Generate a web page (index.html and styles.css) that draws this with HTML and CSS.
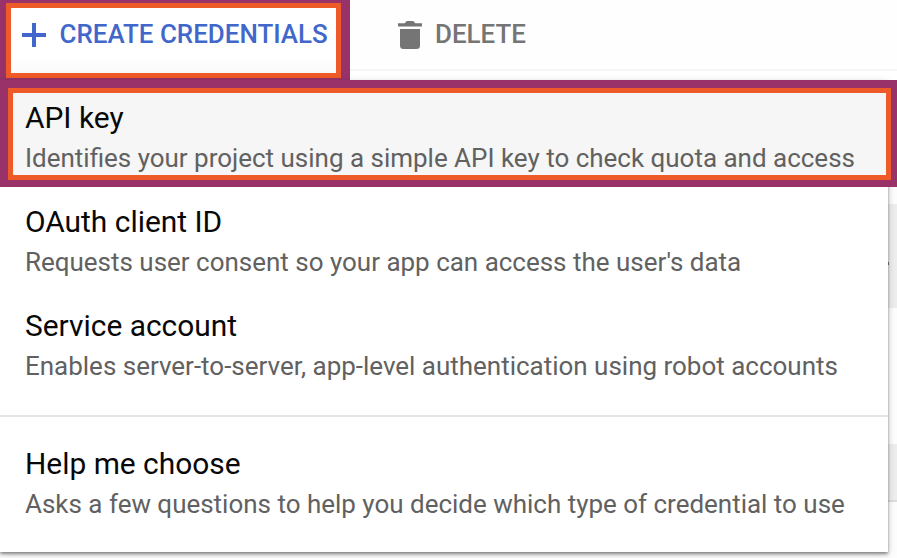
FILE: index.html
```html
<!DOCTYPE html>
<html lang="en">
<head>
<meta charset="utf-8">
<title>Create credentials</title>
<link rel="stylesheet" href="styles.css">
</head>
<body>
<div class="page">
  <div class="toolbar">
    <div class="mark mark-create">
      <button class="action create">
        <svg class="plus" viewBox="0 0 24 24"><path d="M10 0h4v10h10v4H14v10h-4V14H0v-4h10z"/></svg>
        <span>CREATE CREDENTIALS</span>
      </button>
    </div>
    <button class="action delete">
      <svg class="trash" viewBox="0 0 24 28"><path d="M0 2.200h6.800Q8 0 9.500 0h5Q16 0 17.200 2.200H24V5.500H0zM2 8h20v16.500Q22 28 18.500 28h-13Q2 28 2 24.500z"/></svg>
      <span>DELETE</span>
    </button>
  </div>
  <div class="content">
    <div class="menu">
      <div class="mark mark-item">
        <div class="item selected">
          <div class="title">API key</div>
          <div class="desc">Identifies your project using a simple API key to check quota and access</div>
        </div>
      </div>
      <div class="item">
        <div class="title">OAuth client ID</div>
        <div class="desc">Requests user consent so your app can access the user's data</div>
      </div>
      <div class="item">
        <div class="title">Service account</div>
        <div class="desc">Enables server-to-server, app-level authentication using robot accounts</div>
      </div>
      <div class="item help">
        <div class="title">Help me choose</div>
        <div class="desc">Asks a few questions to help you decide which type of credential to use</div>
      </div>
    </div>
    <div class="behind">
      <div class="band"><span class="speck"></span></div>
      <div class="row"></div>
      <div class="band short"></div>
    </div>
  </div>
</div>
</body>
</html>
```
FILE: styles.css
```css
* { box-sizing: border-box; }
body { margin: 0; background: #fdfdfd; font-family: Roboto, "Liberation Sans", sans-serif; }
.page { width: 897px; height: 558px; overflow: hidden; }
.toolbar { display: flex; height: 80px; background: linear-gradient(#fefefe 69px, #f5f5f5 69px, #f7f7f7 71px, #fff 71px); }
.mark { background: #983268; }
.mark-create { width: 350px; height: 80px; padding: 3px 9px 2px 6px; }
.action { display: flex; align-items: flex-start; border: 0; margin: 0; padding: 0; background: none; font: 500 25.95px/30px Roboto, "Liberation Sans", sans-serif; white-space: nowrap; text-align: left; }
.create { width: 335px; height: 75px; border: 5px solid #ee5a28; background: linear-gradient(#fff 75%, #fafafa); padding: 11px 0 0 11px; color: #4167cb; }
.plus { width: 24px; height: 24px; margin: 4px 13.500px 0 0; fill: #4167cb; flex: none; }
.delete { padding: 19px 0 0 48px; color: #757575; }
.trash { width: 24px; height: 28px; margin: 2px 13px 0 0; fill: #757575; flex: none; }
.content { display: flex; height: 478px; }
.menu { position: relative; width: 888px; height: 472px; flex: none; background: #fff; box-shadow: 0 2px 3px rgba(0,0,0,.42), 0 3px 9px rgba(0,0,0,.14); }
.mark-item { width: 897px; height: 107px; padding: 8px 6px 7px 8px; }
.item { height: 104px; padding: 15px 0 0 25px; white-space: nowrap; }
.selected { height: 92px; border: 5px solid #ee5a28; background: #f5f6f5; padding: 5px 0 0 12px; }
.help { margin-top: 20px; height: 137px; border-top: 2px solid #e5e5e5; padding-top: 27px; }
.title, .desc { height: 40px; line-height: 40px; }
.title { font-size: 29.9px; color: #080808; }
.desc { font-size: 25.97px; color: #616161; }
.behind { width: 9px; padding-top: 124px; }
.band { height: 104px; background: #eee; overflow: hidden; }
.speck { display: block; width: 1px; height: 3px; margin-top: 58px; background: #777; }
.row { height: 136px; }
.short { height: 58px; border-bottom: 2px solid #dedede; }
```
